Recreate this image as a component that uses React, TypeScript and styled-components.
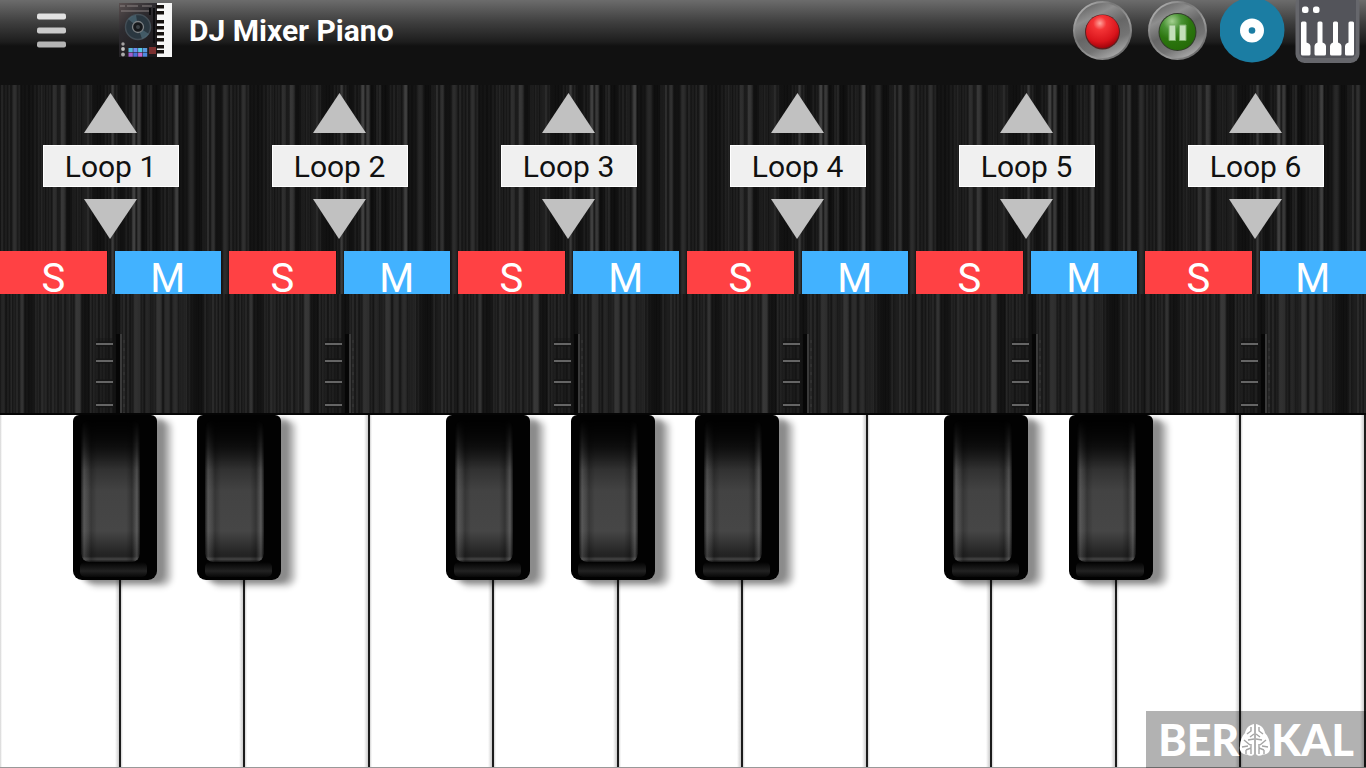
import React from "react";
import styled, { createGlobalStyle, css } from "styled-components";

const GlobalStyle = createGlobalStyle`
  *, *::before, *::after { box-sizing: border-box; }
  body { margin: 0; background: #111; font-family: Roboto, "Open Sans", sans-serif; }
  button { font-family: inherit; border: 0; padding: 0; margin: 0; background: none; cursor: pointer; }
  svg { display: block; }
`;

/* Brushed vertical strands, one tile per mixer channel. */
const TILE = 229;

function brushed(seed: number, base: number, strands: number[][]): string {
  let state = seed;
  const next = () => {
    state = (state * 16807) % 2147483647;
    return state / 2147483647;
  };
  const stops: string[] = [];
  let x = 0;
  let bright = false;
  while (x <= TILE) {
    const r = next();
    let level = bright ? base + 14 + r * 16 : base - 4 + r * 8;
    strands.forEach(([at, half, tone]) => {
      if (Math.abs(x - at) <= half) level = tone > 20 ? tone + r * 8 : (level + tone * 2) / 3;
    });
    const g = Math.round(level);
    stops.push(`rgb(${g},${g},${g}) ${((x / TILE) * 100).toFixed(2)}%`);
    bright = !bright;
    x += next() > 0.55 ? 2 : 1;
  }
  return `linear-gradient(90deg, ${stops.join(", ")})`;
}

const upperGrain = brushed(4127, 17, [
  [2, 1, 40], [15, 1, 42], [28, 6, 12], [54, 1, 40], [62, 1, 52], [68, 2, 10],
  [88, 1, 38], [98, 5, 12], [113, 1, 56], [121, 3, 14], [134, 1, 60], [139, 1, 50],
  [144, 2, 8], [151, 1, 44], [157, 2, 8], [177, 1, 56], [183, 2, 14],
  [192, 1, 36], [199, 3, 8], [208, 1, 50], [213, 1, 44], [219, 2, 14], [226, 1, 42],
]);

const lowerGrain = brushed(97713, 19, [
  [4, 1, 34], [22, 2, 48], [30, 4, 14], [44, 1, 30], [67, 1, 32],
  [78, 2, 50], [86, 4, 14], [97, 1, 40], [116, 2, 8], [136, 2, 42], [148, 1, 36],
  [158, 1, 50], [166, 2, 38], [176, 1, 40], [198, 5, 10], [213, 1, 42],
  [224, 1, 38],
]);

const Page = styled.main`
  min-height: 100vh;
  display: flex;
  flex-direction: column;
  overflow: hidden;
  position: relative;
`;

const Header = styled.header`
  height: 85px;
  flex: none;
  display: flex;
  align-items: flex-start;
  padding: 0 6px 0 36px;
  background: linear-gradient(#6c6c6c 0, #3f3f3f 22px, #1d1d1d 42px, #111 46px, #111 100%);
`;

const MenuButton = styled.button`
  height: 62px;
  width: 32px;
`;

const Brand = styled.div`
  display: flex;
  align-items: center;
  height: 62px;
  margin-left: 50px;
  gap: 16px;
`;

const Title = styled.h1`
  margin: 0;
  font-size: 30px;
  line-height: 62px;
  font-weight: 700;
  color: #fff;
  white-space: nowrap;
`;

const Actions = styled.div`
  margin-left: auto;
  display: flex;
  gap: 10px;
`;

const RoundAction = styled.button`
  width: 65px;
  height: 64px;
`;

const Mixer = styled.section`
  flex: none;
  display: grid;
  grid-template-columns: repeat(6, minmax(0, 1fr));
  column-gap: 8px;
  border-bottom: 2px solid #050505;
  background-color: #161616;
  background-image: ${upperGrain}, ${lowerGrain};
  background-size: calc((100% + 8px) / 6) 209px, calc((100% + 8px) / 6) 100%;
  background-repeat: repeat-x, repeat-x;
  background-position: 0 0, 0 0;
`;

const Channel = styled.div`
  display: flex;
  flex-direction: column;
  align-items: center;
  padding-top: 8px;
  gap: 12px;
`;

const Step = styled.button`
  width: 54px;
  height: 40px;
`;

const LoopName = styled.button`
  width: 136px;
  height: 42px;
  background: #f0f0f0;
  color: #111;
  font-size: 30px;
  line-height: 42px;
  border: 1px solid #fff;
`;

const Switches = styled.div`
  align-self: stretch;
  display: grid;
  grid-template-columns: 1fr 1fr;
  column-gap: 8px;
`;

const Switch = styled.button<{ $tone: string }>`
  display: flex;
  justify-content: center;
  align-items: flex-start;
  height: 43px;
  padding-top: 13px;
  background: ${(p) => p.$tone};
  color: #fff;
  font-size: 40px;
  line-height: 30px;
`;

const FaderWrap = styled.div`
  padding-top: 28px;
`;

const Keyboard = styled.section`
  flex: 1 0 353px;
  display: flex;
  background: #fff;
  border-bottom: 1px solid #999;
`;

const KeySlot = styled.div<{ $grow: number }>`
  flex: ${(p) => p.$grow} 1 0;
  min-width: 0;
  position: relative;
  display: flex;
`;

const WhiteKey = styled.button`
  flex: 1;
  background: linear-gradient(90deg, #d4d4d4 0, #fff 2px, #fff calc(100% - 4px), #ccc 100%);
  border-right: 2px solid #1c1c1c;
`;

const keyFace = css`
  &::before {
    content: "";
    position: absolute;
    left: 10%;
    right: 20%;
    top: 3%;
    bottom: 11%;
    border-radius: 8px;
    background:
      linear-gradient(90deg, rgba(0,0,0,.6) 0, rgba(130,130,130,.3) 3px, rgba(90,90,90,.15) 7px, rgba(0,0,0,.2) 10px, transparent 16px, transparent calc(100% - 14px), rgba(0,0,0,.25) calc(100% - 8px), rgba(130,130,130,.35) calc(100% - 3px), rgba(0,0,0,.6) 100%),
      linear-gradient(#090909 0, #141414 15%, #2c2c2c 30%, #434343 50%, #464646 78%, #262626 93%, #222 96%, #444 98%, #141414 100%);
    -webkit-mask-image: linear-gradient(transparent 0, #000 35%);
    mask-image: linear-gradient(transparent 0, #000 35%);
  }
  &::after {
    content: "";
    position: absolute;
    left: 9%;
    right: 11%;
    bottom: 2%;
    height: 9%;
    border-radius: 5px;
    background: linear-gradient(rgba(30, 30, 30, 0), #222 60%, #080808);
  }
`;

const BlackKey = styled.button`
  position: absolute;
  z-index: 2;
  top: 0;
  right: -36px;
  width: 84px;
  height: 47%;
  background: #020202;
  border-radius: 6px 6px 9px 9px;
  box-shadow: 8px 3px 4px rgba(0, 0, 0, 0.22), 14px 6px 6px rgba(0, 0, 0, 0.3);
  ${keyFace}
`;

const KeyClip = styled.div`
  flex: 1;
  display: flex;
  overflow: hidden;
`;

const Watermark = styled.div`
  position: absolute;
  z-index: 3;
  right: 0;
  bottom: 0;
  height: 57px;
  width: 220px;
  display: flex;
  align-items: center;
  justify-content: center;
  background: rgba(0, 0, 0, 0.3);
  color: #fff;
  font-family: Lato, sans-serif;
  font-size: 43px;
  line-height: 57px;
  font-weight: 900;
`;

function MenuIcon() {
  return (
    <svg width="32" height="62" viewBox="0 0 32 62" aria-hidden="true">
      <g>
        <rect x="1" y="13.5" width="29" height="6" rx="2" fill="#e2e2e2" />
        <rect x="1" y="27.5" width="29" height="6" rx="2" fill="#cacaca" />
        <rect x="1" y="41.5" width="29" height="6" rx="2" fill="#b4b4b4" />
      </g>
    </svg>
  );
}

function LogoIcon() {
  const pads = ["#58b6dc", "#6e8df0", "#58c8e8", "#5a9ae0", "#a060d0", "#4a6fd8", "#c06ad0", "#4d8ae0"];
  const blacks = [3, 9, 18, 24, 30, 36, 43, 48];
  return (
    <svg width="55" height="56" viewBox="0 0 55 56" aria-hidden="true">
      <defs>
        <linearGradient id="deck" x1="0" y1="0" x2="0.6" y2="1">
          <stop offset="0" stopColor="#5a5050" />
          <stop offset="0.4" stopColor="#2e2c30" />
          <stop offset="1" stopColor="#1c191c" />
        </linearGradient>
      </defs>
      <rect x="1" y="0" width="40" height="54" fill="url(#deck)" />
      <path d="M2 3h5M9 3h11M24 3h10M3 8h30" stroke="#8a8282" strokeWidth="1" />
      <circle cx="20" cy="24" r="12.5" fill="#2a3740" stroke="#434d55" strokeWidth="1.5" />
      <path d="M20 24L10 16A13 13 0 0 1 18 12ZM20 24L31 31A13 13 0 0 1 24 36Z" fill="#547181" opacity=".6" />
      <circle cx="20" cy="24" r="5.5" fill="#16181b" stroke="#7c8184" strokeWidth="1.3" />
      <circle cx="20" cy="24" r="2" fill="#3c4145" />
      <path d="M36 5v35M32 5v7" stroke="#0c0c0e" strokeWidth="2" />
      <circle cx="5" cy="41" r="1.7" fill="#a4a1a1" />
      <circle cx="5" cy="46" r="1.9" fill="#c2c2c2" />
      <circle cx="5" cy="51.5" r="1.9" fill="#aaa" />
      {pads.map((fill, i) => (
        <rect key={i} x={10.5 + (i % 4) * 4.8} y={45 + Math.floor(i / 4) * 4.6} width="4.3" height="4.1" fill={fill} />
      ))}
      <rect x="31" y="44" width="7" height="7" fill="#7b3030" />
      <rect x="39" y="0" width="15" height="54" fill="#f6f6f6" />
      {blacks.map((y) => (
        <rect key={y} x="38" y={y - 1} width="8" height="3.5" fill="#15110f" />
      ))}
    </svg>
  );
}

function MetalRing({ id }: { id: string }) {
  return (
    <>
      <defs>
        <linearGradient id={`${id}-rim`} x1="0" y1="0" x2="1" y2="1">
          <stop offset="0" stopColor="#d0d0d0" />
          <stop offset="0.35" stopColor="#777" />
          <stop offset="0.65" stopColor="#9a9a9a" />
          <stop offset="1" stopColor="#4b4b4b" />
        </linearGradient>
        <linearGradient id={`${id}-dish`} x1="0.2" y1="0" x2="0.7" y2="1">
          <stop offset="0" stopColor="#626262" />
          <stop offset="0.25" stopColor="#8e8e8e" />
          <stop offset="0.5" stopColor="#666" />
          <stop offset="0.75" stopColor="#747474" />
          <stop offset="1" stopColor="#acacac" />
        </linearGradient>
      </defs>
      <circle cx="32.5" cy="30.5" r="29.5" fill={`url(#${id}-rim)`} />
      <circle cx="32.5" cy="30.5" r="27.5" fill={`url(#${id}-dish)`} />
    </>
  );
}

function RecordIcon() {
  return (
    <svg width="65" height="64" viewBox="0 0 65 64" aria-hidden="true">
      <MetalRing id="rec" />
      <defs>
        <radialGradient id="red" cx="0.42" cy="0.25" r="0.8">
          <stop offset="0" stopColor="#ffa49c" />
          <stop offset="0.25" stopColor="#f43436" />
          <stop offset="0.7" stopColor="#d9141b" />
          <stop offset="1" stopColor="#960008" />
        </radialGradient>
      </defs>
      <circle cx="32.5" cy="32" r="17.5" fill="#5c2020" />
      <circle cx="32.5" cy="31.5" r="16.5" fill="url(#red)" />
    </svg>
  );
}

function PauseIcon() {
  return (
    <svg width="65" height="64" viewBox="0 0 65 64" aria-hidden="true">
      <MetalRing id="pause" />
      <defs>
        <radialGradient id="green" cx="0.35" cy="0.2" r="0.85">
          <stop offset="0" stopColor="#a5d192" />
          <stop offset="0.3" stopColor="#4b9436" />
          <stop offset="0.6" stopColor="#2c760f" />
          <stop offset="1" stopColor="#246a08" />
        </radialGradient>
      </defs>
      <circle cx="32.5" cy="32" r="19" fill="#303b2a" />
      <circle cx="32.5" cy="32" r="18" fill="url(#green)" />
      <path d="M24 25h6.5v15.5H24zM34.500 25H41v15.500h-6.500z" fill="#c3dfba" stroke="#7bb068" strokeWidth="1" />
    </svg>
  );
}

function DiscIcon() {
  return (
    <svg width="65" height="64" viewBox="0 0 65 64" aria-hidden="true">
      <circle cx="32" cy="30" r="32.5" fill="#1b7da3" />
      <circle cx="32" cy="30.5" r="12" fill="#fff" />
      <circle cx="32" cy="30.5" r="3.3" fill="#1b7da3" />
    </svg>
  );
}

function PianoIcon() {
  return (
    <svg width="65" height="64" viewBox="0 0 65 64" aria-hidden="true">
      <rect x="0.5" y="-5" width="64" height="68" rx="9" fill="#66676c" />
      <rect x="4" y="-5" width="57" height="63" rx="6" fill="#53545a" />
      <rect x="7" y="6.5" width="6.5" height="6.5" rx="2.5" fill="#fff" />
      <rect x="18" y="6.5" width="6.5" height="6.5" rx="2.5" fill="#fff" />
      <path
        fill="#fff"
        d="M6 23q0-1.500 1.500-1.500h2.500q1.500 0 1.500 1.500v19.500q4 1 4 4v7.500q0 1.500-1.500 1.500H7.500Q6 55.500 6 54ZM22.500 23q0-1.500 1.500-1.500h2q1.500 0 1.500 1.500v19.500q3.500 1 3.500 4v7.500q0 1.500-1.500 1.500h-8.500Q19.500 55.500 19.500 54v-7.500q0-3 3-4ZM38 23q0-1.500 1.500-1.500h2q1.500 0 1.500 1.500v19.500q3.500 1 3.500 4v7.500q0 1.500-1.500 1.500h-8.500Q35 55.500 35 54v-7.500q0-3 3-4ZM53.500 23q0-1.500 1.500-1.500h2.500q1.500 0 1.500 1.500v31q0 1.500-1.500 1.500H51.500Q50 55.500 50 54v-7.500q0-3 3.500-4Z"
      />
    </svg>
  );
}

function Triangle({ down }: { down?: boolean }) {
  return (
    <svg width="54" height="40" viewBox="0 0 54 40" aria-hidden="true">
      <path d={down ? "M0 0H53L26 40Z" : "M26.500 0L53 40H0Z"} fill="#c1c1c1" />
    </svg>
  );
}

function FaderTop() {
  return (
    <svg width="32" height="79" viewBox="0 0 32 79" aria-hidden="true">
      <rect x="1" y="4" width="20" height="75" fill="#151515" opacity=".35" />
      {[10, 27, 48, 71].map((y) => (
        <g key={y}>
          <rect x="1" y={y - 2.5} width="18" height="5" fill="#151515" />
          <rect x="1" y={y - 1} width="17" height="2" fill="#656565" />
        </g>
      ))}
      <rect x="21" y="0" width="4" height="79" fill="#060606" />
      <rect x="25" y="0" width="2" height="79" fill="#3a3a3a" />
      <path d="M29 6v73" stroke="#303030" strokeWidth="2" strokeDasharray="3 5" />
    </svg>
  );
}

function BrainIcon() {
  return (
    <svg width="32" height="34" viewBox="0 0 32 34" aria-hidden="true">
      <path
        d="M15 1C10 2 7 5 6 10C3 13 1 18 1 23C0 28 3 32 8 31.500C11 33.500 14 33 15 31ZM17 1C22 2 25 5 26 10C29 13 31 18 31 23C32 28 29 32 24 31.500C21 33.500 18 33 17 31Z"
        fill="#fff"
      />
      <path
        d="M12 4v4l-4 3M15 11l-4 3M15 16l-6 1M5 17l6 5M3 24l6-1M12 21v4l-5 2M12 25v6M20 4v4l4 3M17 11l4 3M17 16l6 1M27 17l-6 5M29 24l-6-1M20 21v4l5 2M20 25v6M7 27v4M25 27v4"
        fill="none"
        stroke="#a5a5a5"
        strokeWidth="1.4"
      />
    </svg>
  );
}

const loops = ["Loop 1", "Loop 2", "Loop 3", "Loop 4", "Loop 5", "Loop 6"];

/* The first key is scrolled slightly off the left edge. */
const keys = [
  { note: "C3", sharp: true, grow: 1206 },
  { note: "D3", sharp: true, grow: 1246 },
  { note: "E3", sharp: false, grow: 1246 },
  { note: "F3", sharp: true, grow: 1246 },
  { note: "G3", sharp: true, grow: 1246 },
  { note: "A3", sharp: true, grow: 1246 },
  { note: "B3", sharp: false, grow: 1246 },
  { note: "C4", sharp: true, grow: 1246 },
  { note: "D4", sharp: true, grow: 1246 },
  { note: "E4", sharp: false, grow: 1246 },
  { note: "F4", sharp: false, grow: 1246 },
];

export default function App() {
  return (
    <Page>
      <GlobalStyle />
      <Header>
        <MenuButton aria-label="Menu">
          <MenuIcon />
        </MenuButton>
        <Brand>
          <LogoIcon />
          <Title>DJ Mixer Piano</Title>
        </Brand>
        <Actions>
          <RoundAction aria-label="Record"><RecordIcon /></RoundAction>
          <RoundAction aria-label="Pause"><PauseIcon /></RoundAction>
          <RoundAction aria-label="Disc"><DiscIcon /></RoundAction>
          <RoundAction aria-label="Piano"><PianoIcon /></RoundAction>
        </Actions>
      </Header>
      <Mixer>
        {loops.map((name) => (
          <Channel key={name}>
            <Step aria-label={`${name}: next`}><Triangle /></Step>
            <LoopName>{name}</LoopName>
            <Step aria-label={`${name}: previous`}><Triangle down /></Step>
            <Switches>
              <Switch $tone="#ff4144">S</Switch>
              <Switch $tone="#42b2ff">M</Switch>
            </Switches>
            <FaderWrap>
              <FaderTop />
            </FaderWrap>
          </Channel>
        ))}
      </Mixer>
      <Keyboard>
        <KeyClip>
          {keys.map((k) => (
            <KeySlot key={k.note} $grow={k.grow}>
              <WhiteKey aria-label={k.note} />
              {k.sharp && <BlackKey aria-label={`${k.note} sharp`} />}
            </KeySlot>
          ))}
        </KeyClip>
      </Keyboard>
      <Watermark>
        <span>BER</span>
        <BrainIcon />
        <span>KAL</span>
      </Watermark>
    </Page>
  );
}
